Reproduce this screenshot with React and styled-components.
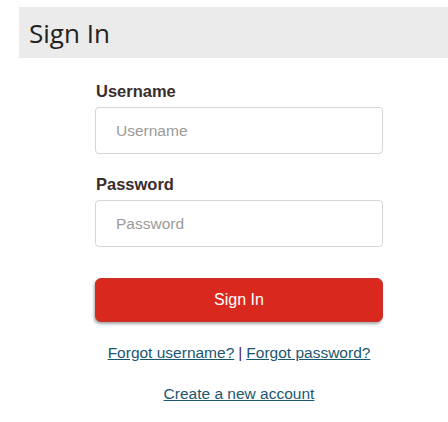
import React from 'react'
import styled, { createGlobalStyle } from 'styled-components'

const GlobalStyle = createGlobalStyle`
  body {
    margin: 0;
    background: #fff;
    font-family: "Liberation Sans", Arial, sans-serif;
  }
`

function App() {
  return (
    <>
      <GlobalStyle />
      <Page>
        <Header>
          <Title>Sign In</Title>
        </Header>
        <Form>
          <Label htmlFor="username">Username</Label>
          <Input id="username" placeholder="Username" />
          <Label htmlFor="password">Password</Label>
          <Input id="password" type="password" placeholder="Password" />
          <Button type="button">Sign In</Button>
          <LinkRow>
            <Link href="#">Forgot username?</Link>
            <Sep>|</Sep>
            <Link href="#">Forgot password?</Link>
          </LinkRow>
          <LinkRow>
            <Link href="#">Create a new account</Link>
          </LinkRow>
        </Form>
      </Page>
    </>
  )
}

export default App

const Page = styled.div`
  padding-top: 7px;
`

const Header = styled.div`
  margin-left: 19px;
  height: 51px;
  background: #ebebeb;
  display: flex;
  align-items: center;
  padding-left: 10px;
`

const Title = styled.h1`
  margin: 0;
  font-family: "Open Sans", sans-serif;
  font-weight: 400;
  font-size: 26px;
  color: #222;
`

const Form = styled.form`
  width: 288px;
  margin-left: 95px;
  display: flex;
  flex-direction: column;
  padding-top: 23px;
`

const Label = styled.label`
  font-weight: 700;
  font-size: 16.5px;
  color: #3a2d2d;
  margin-left: 1px;
  line-height: 20px;
  margin-bottom: 6px;
`

const Input = styled.input`
  box-sizing: border-box;
  height: 47px;
  border: 1px solid #d6d6d6;
  border-radius: 4px;
  padding: 0 20px;
  font-family: "Liberation Sans", Arial, sans-serif;
  font-size: 15.5px;
  margin-bottom: 20px;
  outline: none;

  &::placeholder {
    color: #9a9a9a;
  }
`

const Button = styled.button`
  margin-top: 11px;
  height: 44px;
  border: 1px solid #c4342a;
  border-radius: 6px;
  background: #d9291e;
  color: #fff;
  font-family: "Liberation Sans", Arial, sans-serif;
  font-size: 16px;
  box-shadow: -1px 2px 3px rgba(0, 0, 0, 0.35);
  cursor: pointer;
`

const LinkRow = styled.div`
  display: flex;
  justify-content: center;
  align-items: baseline;
  gap: 4px;
  margin-top: 21px;
  white-space: nowrap;
  font-size: 15.5px;
  line-height: 20px;
`

const Link = styled.a`
  color: #1b5670;
  text-decoration: underline;
`

const Sep = styled.span`
  color: #4a2050;
`
